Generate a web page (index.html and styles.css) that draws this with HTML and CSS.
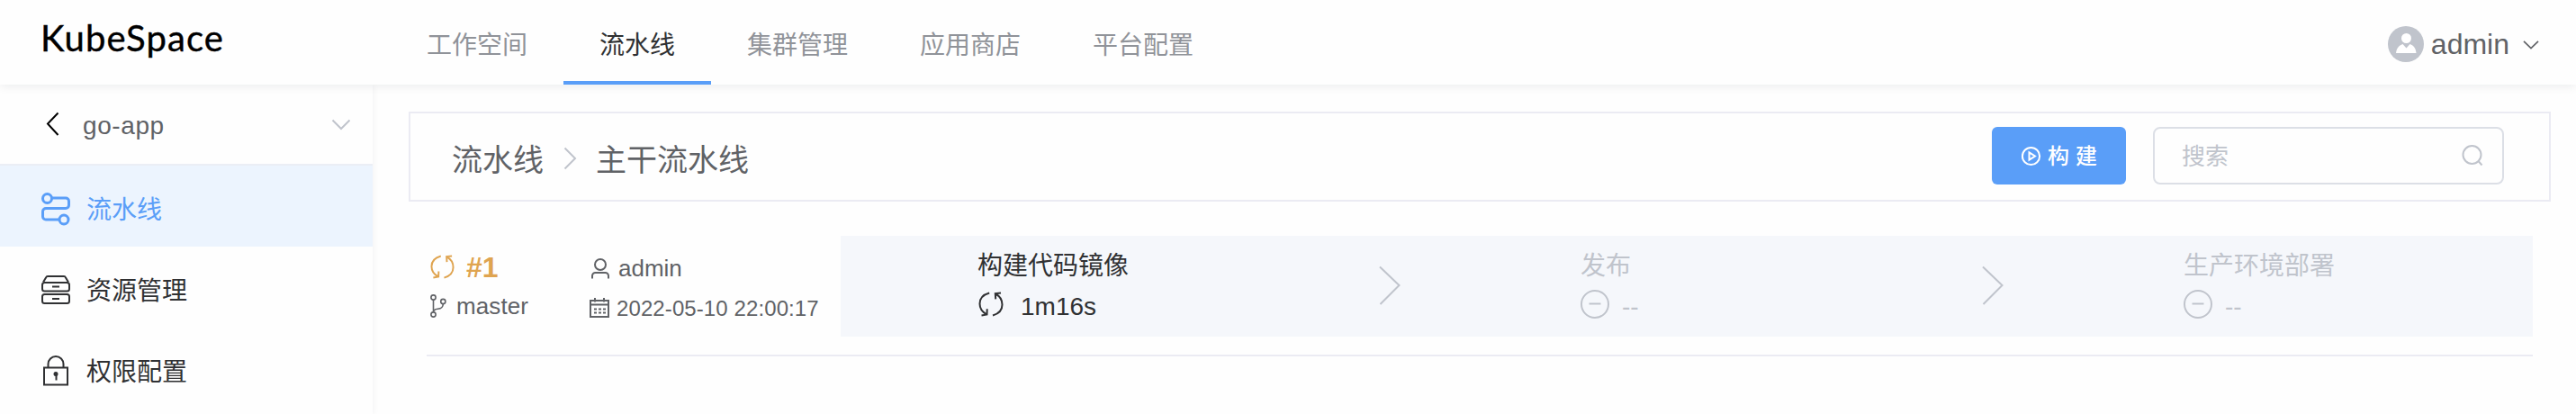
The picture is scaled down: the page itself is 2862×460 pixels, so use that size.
FILE: index.html
```html
<!DOCTYPE html>
<html lang="zh-CN">
<head>
<meta charset="utf-8">
<title>KubeSpace</title>
<link rel="stylesheet" href="styles.css">
</head>
<body>
<svg class="defs" width="0" height="0">
  <symbol id="sync" viewBox="0 0 28 28"><path d="M12.2 1.5C5 3.5 1.5 8 1.5 13.5c0 5 2.6 9 7.6 11.8M3.5 26.4l6-1 .2-6.2M16 26.500C23 24.500 26.500 20 26.500 14.500 26.500 9.500 24 5.200 19 2.500M25 1.600l-6.200.6.4 6.200"/></symbol>
  <symbol id="minus" viewBox="0 0 32 32"><circle cx="16" cy="16" r="15"/><path d="M9.500 15.500h13"/></symbol>
  <symbol id="right" viewBox="0 0 24 44"><path d="M1 1.500 22.500 22 1.500 43"/></symbol>
</svg>
<header class="header">
  <div class="logo">KubeSpace</div>
  <nav class="nav">
    <a class="nav-item">工作空间</a>
    <a class="nav-item active">流水线</a>
    <a class="nav-item">集群管理</a>
    <a class="nav-item">应用商店</a>
    <a class="nav-item">平台配置</a>
  </nav>
  <div class="user">
    <svg class="avatar" width="40" height="40" viewBox="0 0 40 40"><circle cx="20" cy="20" r="20" fill="#c0c4cc"/><circle cx="20.500" cy="13.500" r="5.500" fill="#fff"/><path d="M9 30c.5-5 3-8.500 7.500-10l4 4.500 4-4.500c4.500 1.500 6.500 5 7 10z" fill="#fff"/></svg>
    <span>admin</span>
    <svg class="line user-arrow" width="18" height="10" viewBox="0 0 18 10"><path d="m1 .8 8 7.700 8-7.700"/></svg>
  </div>
</header>
<div class="body">
  <aside class="side">
    <div class="app">
      <svg class="line back" width="15" height="28" viewBox="0 0 15 28"><path d="M13.500 1.500 2 13.500l11.500 12.500"/></svg>
      <span class="app-name">go-app</span>
      <svg class="line app-arrow" width="22" height="13" viewBox="0 0 22 13"><path d="m1.500 1.500 9.500 9.500 9.500-9.500"/></svg>
    </div>
    <a class="side-item active">
      <svg class="line" width="32" height="36" viewBox="0 0 32 36"><g stroke-width="3"><circle cx="6.500" cy="6.500" r="5"/><path d="M11.500 6H27a3.500 3.500 0 0 1 3.500 3.500v4.500a3.500 3.500 0 0 1-3.500 3.500H5a3.500 3.500 0 0 0-3.500 3.500v5.500A3.500 3.500 0 0 0 5 30h15"/><circle cx="25" cy="30" r="5"/></g></svg>
      <span>流水线</span>
    </a>
    <a class="side-item">
      <svg class="line" width="32" height="32" viewBox="0 0 32 32"><path d="M2 7.500 5 2.500Q5.600 1 7 1h18q1.400 0 2 1.500l3 5"/><rect x="1" y="8" width="30" height="9.500" rx="2.500"/><rect x="1" y="21" width="30" height="10" rx="2.500"/><path d="M12 12.500h8M12 26h8"/></svg>
      <span>资源管理</span>
    </a>
    <a class="side-item">
      <svg class="line" width="32" height="34" viewBox="0 0 32 34"><path d="M3 13.500h26v19H3zM7.500 13.500V9.500a8.500 8.500 0 0 1 17 0v4"/><circle cx="16" cy="20.500" r="1.500" fill="currentColor"/><path d="M16.500 20v7.500"/></svg>
      <span>权限配置</span>
    </a>
  </aside>
  <main class="main">
    <section class="bar">
      <span class="crumb">流水线</span>
      <svg class="line crumb-sep" width="15" height="26" viewBox="0 0 15 26"><path d="M1.500 1.500 13 13 1.500 24.500"/></svg>
      <span class="crumb">主干流水线</span>
      <button class="build"><svg class="line" width="21" height="21" viewBox="0 0 21 21"><circle cx="10.500" cy="10.500" r="9.600"/><path d="M8.500 6.300v8.400l6.500-4.200z"/></svg><span>构建</span></button>
      <label class="search"><span>搜索</span><svg class="line" width="24" height="24" viewBox="0 0 24 24"><circle cx="11.500" cy="11" r="10"/><path d="m18.500 18 4 4.500"/></svg></label>
    </section>
    <section class="run">
      <div class="col id">
        <div class="number"><svg class="line" width="27" height="27"><use href="#sync"/></svg><b>#1</b></div>
        <div class="branch"><svg class="line" width="18" height="26" viewBox="0 0 18 26"><circle cx="3.500" cy="3.500" r="2.600"/><circle cx="3.500" cy="22.500" r="2.600"/><circle cx="14.300" cy="8" r="2.600"/><path d="M3.500 6v14M14.300 10.500c0 5-3 5.500-6 5.800-2.800.3-4.800 1-4.800 3.700"/></svg><span>master</span></div>
      </div>
      <div class="col meta">
        <div class="author"><svg class="line" width="22" height="23" viewBox="0 0 22 23"><circle cx="11" cy="7" r="6"/><path d="M2 22.500v-3a3.500 3.500 0 0 1 3.500-3.500h11a3.500 3.500 0 0 1 3.500 3.500v3"/></svg><span>admin</span></div>
        <div class="date"><svg class="line" width="22" height="22" viewBox="0 0 22 22"><path d="M1 3h20v18H1zM1 7.500h20M6 0v4.500M16 0v4.500"/><path d="M5 12.500h13M5 16.500h13" stroke-dasharray="3 2"/></svg><span>2022-05-10 22:00:17</span></div>
      </div>
      <div class="stages">
        <div class="stage on"><div class="stage-text"><div class="name">构建代码镜像</div><div class="state"><svg class="line" width="28" height="28"><use href="#sync"/></svg><span>1m16s</span></div></div><svg class="line next" width="24" height="44"><use href="#right"/></svg></div>
        <div class="stage"><div class="stage-text"><div class="name">发布</div><div class="state"><svg class="line" width="32" height="32"><use href="#minus"/></svg><span>--</span></div></div><svg class="line next" width="24" height="44"><use href="#right"/></svg></div>
        <div class="stage"><div class="stage-text"><div class="name">生产环境部署</div><div class="state"><svg class="line" width="32" height="32"><use href="#minus"/></svg><span>--</span></div></div></div>
      </div>
    </section>
  </main>
</div>
</body>
</html>
```
FILE: styles.css
```css
* { box-sizing: border-box; }
body {
  margin: 0;
  height: 460px;
  overflow: hidden;
  background: #fefefe;
  color: #606266;
  font: 28px/40px "Liberation Sans", "Noto Sans CJK SC", sans-serif;
}
svg { display: block; flex: none; overflow: visible; }
.defs { position: absolute; }
.line { fill: none; stroke: currentColor; stroke-width: 2; }

.header {
  position: relative;
  z-index: 1;
  display: flex;
  height: 94px;
  background: #fefefe;
  box-shadow: 0 2px 10px rgba(0, 21, 41, .08);
}
.logo {
  width: 434px;
  padding: 18px 0 0 45px;
  color: #000;
  font: 40px/48px Lato, sans-serif;
  letter-spacing: 1.1px;
  -webkit-text-stroke: .4px #000;
}
.nav { display: flex; }
.nav-item {
  height: 94px;
  padding: 31px 40px 0;
  border-bottom: 4px solid transparent;
  color: #909399;
}
.nav-item.active { border-color: #5a9ef8; color: #303133; }
.user {
  display: flex;
  align-items: center;
  margin: 0 41px 4px auto;
  padding-top: 8px;
  font-size: 32px;
}
.avatar { margin-right: 8px; }
.user-arrow { margin: 2px 0 0 15px; stroke-width: 1.700; }

.body { display: flex; height: 366px; }
.side {
  width: 414px;
  box-shadow: 2px 0 6px rgba(0, 21, 41, .04);
}
.app {
  display: flex;
  align-items: center;
  height: 90px;
  padding: 0 24px 0 51px;
  border-bottom: 2px solid #ebeef5;
}
.back { color: #000; }
.app-name { margin: 3px 0 0 26px; letter-spacing: .6px; }
.app-arrow { margin-left: auto; color: #c0c4cc; }
.side-item {
  display: flex;
  align-items: center;
  gap: 18px;
  height: 90px;
  padding: 5px 0 0 46px;
  color: #303133;
}
.side-item span { padding-top: 4px; }
.side-item.active { background: #ecf4fe; color: #5a9ef8; }

.main { flex: 1; padding: 30px 28px 0 40px; }
.bar {
  display: flex;
  align-items: center;
  height: 100px;
  padding: 0 50px 0 46px;
  border: 2px solid #ebebf3;
}
.crumb { padding-top: 8px; font-size: 34px; }
.crumb-sep { margin: 4px 21px 0 22px; color: #c0c4cc; }
.build {
  display: flex;
  align-items: center;
  gap: 8px;
  width: 149px;
  height: 64px;
  margin: 0 30px 2px auto;
  padding: 0 0 0 33px;
  border: 0;
  border-radius: 6px;
  background: #5a9ef8;
  color: #fff;
  font: 500 24px/36px "Liberation Sans", "Noto Sans CJK SC", sans-serif;
  letter-spacing: 7px;
}
.build span, .search span { padding-top: 2px; }
.search {
  display: flex;
  align-items: center;
  justify-content: space-between;
  width: 390px;
  height: 64px;
  margin-bottom: 2px;
  padding: 0 21px 0 30px;
  border: 2px solid #dcdfe6;
  border-radius: 8px;
  color: #c0c4cc;
  font-size: 26px;
}

.run {
  display: flex;
  height: 172px;
  margin: 0 20px;
  padding: 38px 0 20px;
  border-bottom: 2px solid #ebebf3;
}
.col > div { display: flex; align-items: center; height: 44px; font-size: 26px; }
.id { width: 181px; padding: 12px 0 0 4px; }
.meta { width: 279px; padding: 14px 0 0; }
.col .number { color: #dfa450; font-size: 32px; }
.number b { margin: 2px 0 0 13px; }
.branch svg { stroke-width: 1.600; }
.branch span { margin-left: 11px; letter-spacing: .1px; }
.author { gap: 9px; padding-left: 1px; }
.col .date { gap: 8px; font-size: 24px; letter-spacing: .1px; white-space: nowrap; }
.date span { padding-top: 1px; }
.stages { display: flex; flex: 1; background: #f5f7fb; }
.stage {
  display: flex;
  width: 670px;
  padding: 14px 48px 0 152px;
  color: #c0c4cc;
}
.stage:last-child { width: 540px; padding-right: 0; }
.stage.on { color: #303133; }
.stage-text { flex: 1; }
.state { display: flex; align-items: center; gap: 14px; height: 36px; margin-top: 4px; }
.state span { padding-top: 5px; }
.on .state { gap: 19px; padding-left: 1px; }
.next { margin-top: 19px; color: #c0c4cc; }
```
